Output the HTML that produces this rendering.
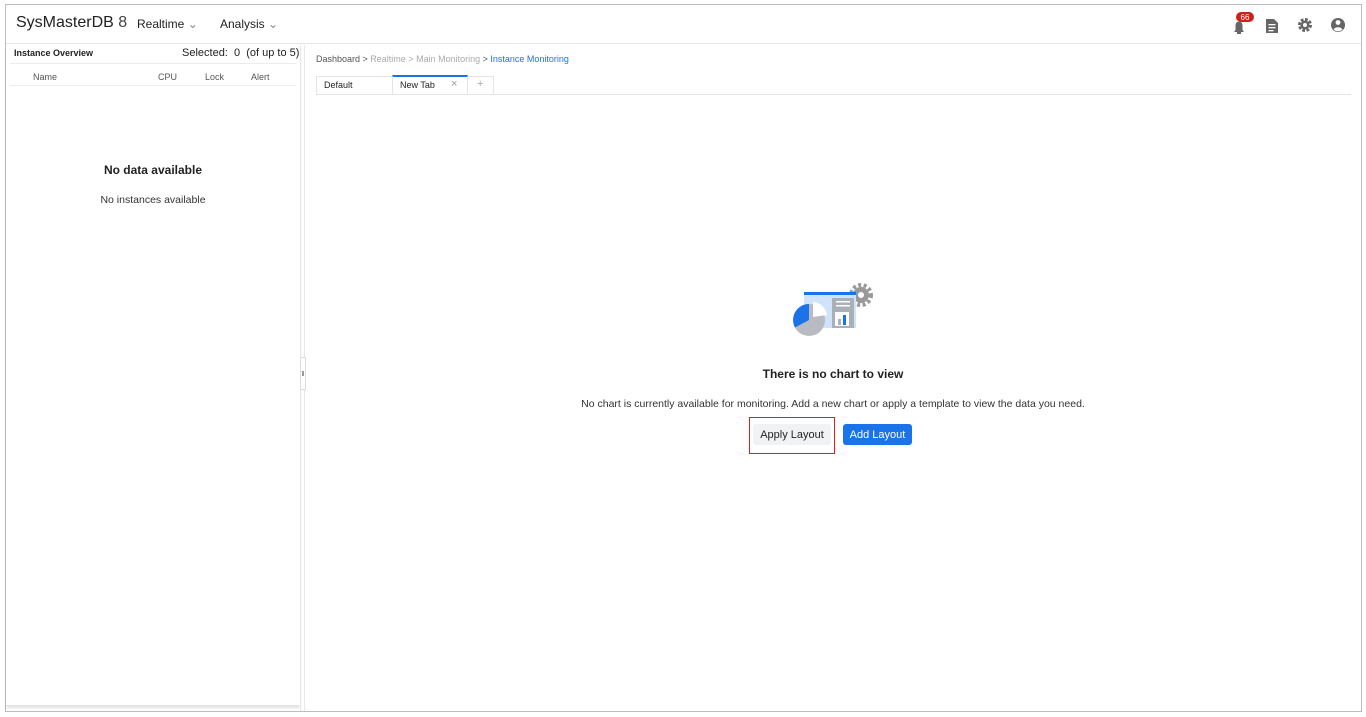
<!DOCTYPE html>
<html><head><meta charset="utf-8"><style>
*{box-sizing:border-box;margin:0;padding:0}
body{width:1366px;height:717px;background:#fff;font-family:"Liberation Sans",sans-serif;color:#222;position:relative;overflow:hidden}
.frame{position:absolute;left:5px;top:4px;width:1357px;height:708px;border:1px solid #bdbdbd}
.hdr{position:absolute;left:6px;top:5px;width:1355px;height:39px;border-bottom:1px solid #e6e6e6}
.abs{position:absolute;white-space:nowrap}
.left{position:absolute;left:6px;top:45px;width:294px;height:660px;background:#fff;box-shadow:0 3px 3px rgba(0,0,0,.12)}
.split{position:absolute;left:300px;top:45px;width:5px;height:666px;border-left:1px solid #e8e8e8;border-right:1px solid #e8e8e8}
.btn{position:absolute;font-size:11px;border-radius:3px;text-align:center;height:21px;padding-top:5px;line-height:12px}
</style></head><body>
<div class="frame"></div>
<div class="hdr"></div>
<div class="abs" style="left:16px;top:14px;font-size:16px;color:#222">SysMasterDB <span style="font-weight:300;color:#444">8</span></div>
<div class="abs" style="left:137px;top:17px;font-size:12px">Realtime <span style="color:#888">&#8964;</span></div>
<div class="abs" style="left:220px;top:17px;font-size:12px">Analysis <span style="color:#888">&#8964;</span></div>
<svg class="abs" style="left:1230px;top:10px" width="130" height="28" viewBox="0 0 130 28">
<path d="M4 22h10l-1.5-2v-5a3.5 3.5 0 0 0-7 0v5z" fill="#666"/><rect x="7" y="22" width="4" height="2" fill="#666"/>
<rect x="6" y="2" width="18" height="10" rx="5" fill="#d0201a"/><text x="15" y="10" font-size="8" fill="#fff" text-anchor="middle" font-family="Liberation Sans">66</text>
<path d="M36 9h8l4 4v10h-12z" fill="#666"/><rect x="38.5" y="14" width="7" height="1.3" fill="#fff"/><rect x="38.5" y="17" width="7" height="1.3" fill="#fff"/><rect x="38.5" y="20" width="5" height="1.3" fill="#fff"/>
<circle cx="75" cy="15" r="5" fill="none" stroke="#666" stroke-width="4" stroke-dasharray="2.5 1.4"/><circle cx="75" cy="15" r="4.5" fill="#666"/><circle cx="75" cy="15" r="2" fill="#fff"/>
<circle cx="108" cy="15" r="7" fill="#666"/><circle cx="108" cy="12.5" r="2.4" fill="#fff"/><path d="M103.5 19.5a5 4 0 0 1 9 0a6.5 6.5 0 0 1-9 0z" fill="#fff"/>
</svg>
<div class="left"></div>
<div class="abs" style="left:14px;top:48px;font-size:9px;font-weight:bold">Instance Overview</div>
<div class="abs" style="left:182px;top:47px;font-size:11px">Selected:&nbsp; 0&nbsp; (of up to 5)</div>
<div class="abs" style="left:10px;top:63px;width:286px;border-top:1px solid #ececec"></div>
<div class="abs" style="left:33px;top:72px;font-size:9px;color:#555">Name</div>
<div class="abs" style="left:158px;top:72px;font-size:9px;color:#555">CPU</div>
<div class="abs" style="left:205px;top:72px;font-size:9px;color:#555">Lock</div>
<div class="abs" style="left:251px;top:72px;font-size:9px;color:#555">Alert</div>
<div class="abs" style="left:10px;top:85px;width:286px;border-top:1px solid #ececec"></div>
<div class="abs" style="left:0;width:306px;top:163px;text-align:center;font-size:12px;font-weight:bold">No data available</div>
<div class="abs" style="left:0;width:306px;top:194px;text-align:center;font-size:10.5px;color:#333">No instances available</div>
<div class="split"></div>
<div class="abs" style="left:300px;top:357px;width:6px;height:33px;border:1px solid #ddd;background:#fff"></div>
<div class="abs" style="left:302px;top:371px;width:2px;height:5px;background:#999"></div>
<div class="abs" style="left:316px;top:54px;font-size:9px;color:#555">Dashboard &gt; <span style="color:#aaa">Realtime &gt; Main Monitoring</span> &gt; <span style="color:#1a73e8">Instance Monitoring</span></div>
<div class="abs" style="left:316px;top:76px;width:178px;height:18px;border:1px solid #e4e4e4;border-bottom:none"></div>
<div class="abs" style="left:392px;top:75px;width:76px;height:19px;background:#fff;border:1px solid #e4e4e4;border-top:2px solid #1a73e8;border-bottom:none"></div>
<div class="abs" style="left:324px;top:80px;font-size:9px">Default</div>
<div class="abs" style="left:400px;top:80px;font-size:9px">New Tab</div>
<div class="abs" style="left:451px;top:78px;font-size:11px;color:#999">×</div>
<div class="abs" style="left:477px;top:78px;font-size:11px;color:#aaa">+</div>
<div class="abs" style="left:316px;top:94px;width:1035px;border-top:1px solid #e4e4e4"></div>
<svg class="abs" style="left:788px;top:280px" width="90" height="60" viewBox="0 0 90 60">
<circle cx="73" cy="15" r="8" fill="#999"/><circle cx="73" cy="15" r="10" fill="none" stroke="#999" stroke-width="4" stroke-dasharray="3 2.5"/><circle cx="73" cy="15" r="3" fill="#fff"/>
<rect x="16" y="12" width="52" height="36" fill="#cfe3fa"/><rect x="16" y="12" width="52" height="3" fill="#1a73e8"/>
<rect x="44" y="18" width="22" height="30" fill="#aab0b8"/><rect x="48" y="21" width="14" height="1.5" fill="#fff"/><rect x="48" y="25" width="14" height="1.5" fill="#fff"/>
<rect x="47" y="32" width="14" height="14" fill="#fff"/><rect x="50" y="39" width="3" height="6" fill="#aab0b8"/><rect x="55" y="35" width="3" height="10" fill="#1a73e8"/>
<circle cx="21" cy="40" r="16" fill="#b8bcc2"/>
<path d="M21 40L7 47.5A16 16 0 0 1 21 24z" fill="#1a73e8"/>
<path d="M25 37V22A15 15 0 0 1 39 35z" fill="#fff"/>
</svg>
<div class="abs" style="left:700px;width:266px;top:367px;text-align:center;font-size:12px;font-weight:bold">There is no chart to view</div>
<div class="abs" style="left:500px;width:666px;top:398px;text-align:center;font-size:10.5px;color:#333">No chart is currently available for monitoring. Add a new chart or apply a template to view the data you need.</div>
<div class="abs" style="left:749px;top:417px;width:86px;height:37px;border:1px solid #d9221c"></div>
<div class="btn" style="left:753px;top:424px;width:78px;background:#f1f2f3;color:#222">Apply Layout</div>
<div class="btn" style="left:843px;top:424px;width:69px;background:#1a73e8;color:#fff">Add Layout</div>
</body></html>
